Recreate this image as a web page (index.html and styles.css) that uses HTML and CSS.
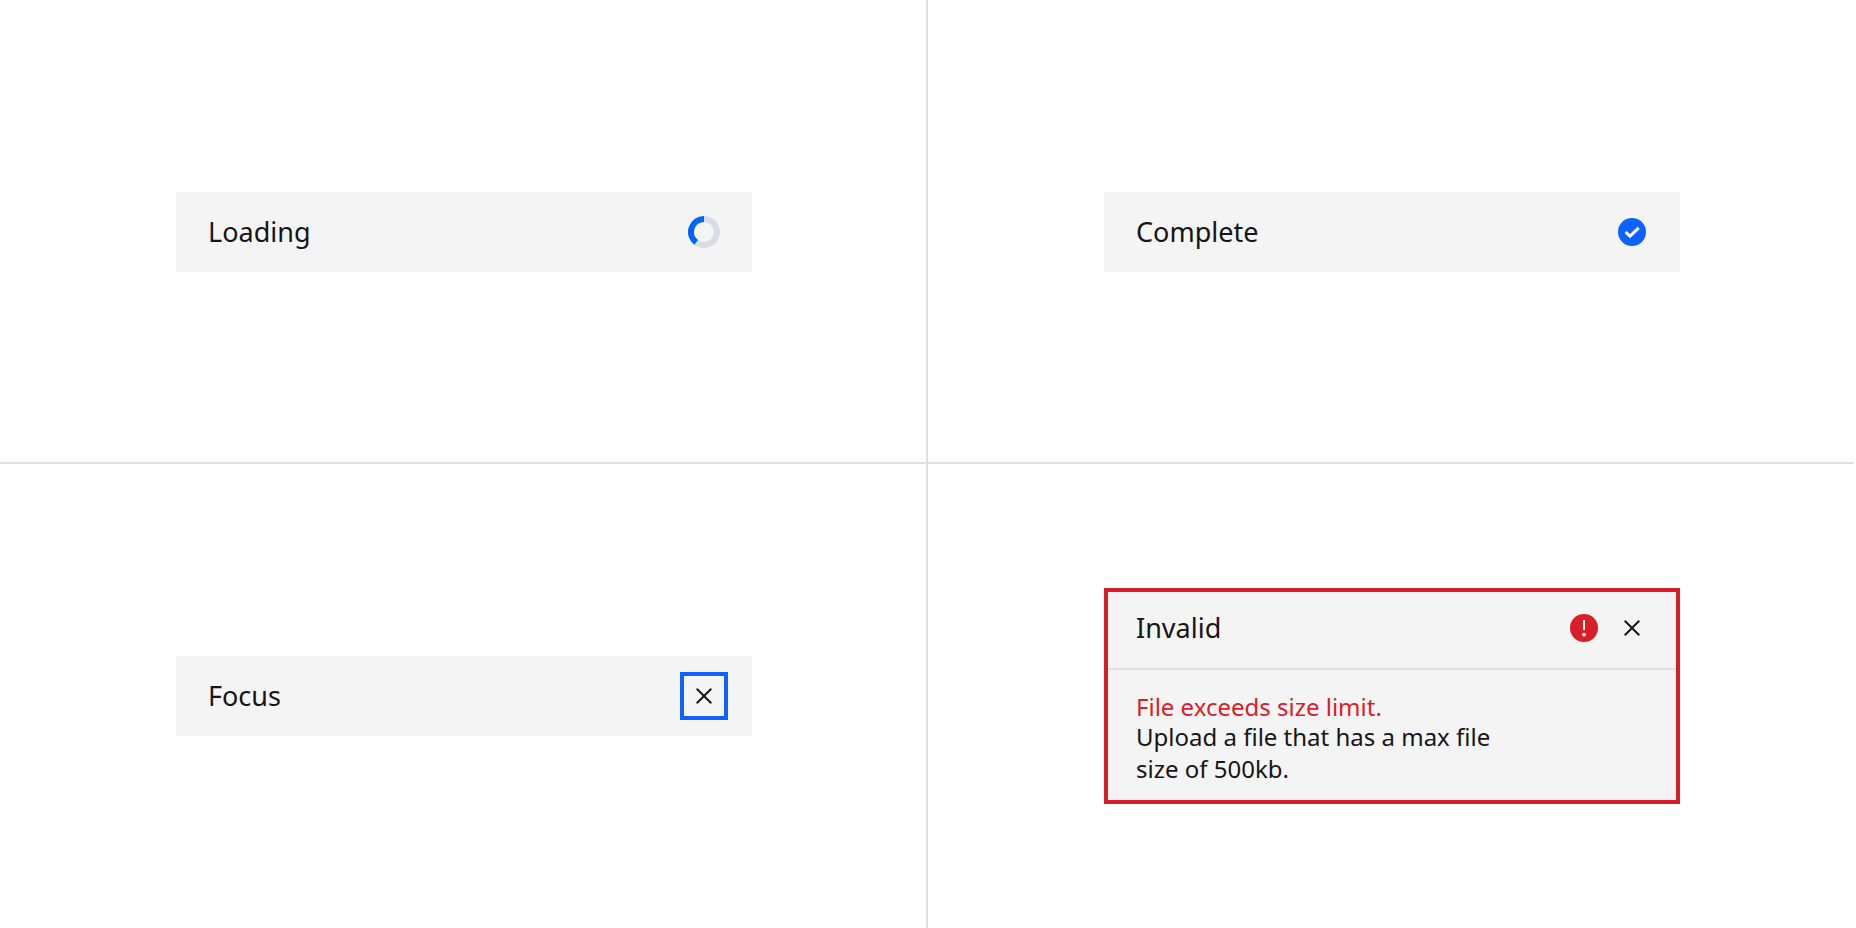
FILE: index.html
```html
<!DOCTYPE html>
<html lang="en">
<head>
<meta charset="utf-8">
<meta name="viewport" content="width=device-width, initial-scale=1">
<title>File uploader states</title>
<link rel="stylesheet" href="styles.css">
</head>
<body>
<main class="states">
  <section class="cell">
    <div class="file">
      <div class="file-row">
        <p class="file-name">Loading</p>
        <svg class="icon" viewBox="0 0 32 32" role="img" aria-label="Uploading">
          <circle class="spinner-track" cx="16" cy="16" r="13"/>
          <path class="spinner-arc" d="M16 3A13 13 0 0 0 8.2 26.4"/>
        </svg>
      </div>
    </div>
  </section>
  <section class="cell">
    <div class="file">
      <div class="file-row">
        <p class="file-name">Complete</p>
        <svg class="icon" viewBox="0 0 32 32" role="img" aria-label="Uploaded">
          <circle class="fill-blue" cx="16" cy="16" r="14"/>
          <path class="tick" d="M9.6 16L14 20.2 22.7 11.9"/>
        </svg>
      </div>
    </div>
  </section>
  <section class="cell">
    <div class="file">
      <div class="file-row">
        <p class="file-name">Focus</p>
        <button class="close close-focused" type="button" aria-label="Remove file">
          <svg class="icon" viewBox="0 0 32 32" aria-hidden="true">
            <path class="fill-dark" d="M24 9.4L22.6 8 16 14.6 9.4 8 8 9.4l6.6 6.6L8 22.6 9.4 24l6.6-6.6 6.6 6.6 1.4-1.4-6.6-6.6z"/>
          </svg>
        </button>
      </div>
    </div>
  </section>
  <section class="cell">
    <div class="file file-invalid">
      <div class="file-row">
        <p class="file-name">Invalid</p>
        <svg class="icon" viewBox="0 0 32 32" role="img" aria-label="Error">
          <circle class="fill-red" cx="16" cy="16" r="14"/>
          <path class="fill-white" d="M15 8h2v10h-2z"/>
          <circle class="fill-white" cx="16" cy="22.6" r="1.9"/>
        </svg>
        <button class="close" type="button" aria-label="Remove file">
          <svg class="icon" viewBox="0 0 32 32" aria-hidden="true">
            <path class="fill-dark" d="M24 9.4L22.6 8 16 14.6 9.4 8 8 9.4l6.6 6.6L8 22.6 9.4 24l6.6-6.6 6.6 6.6 1.4-1.4-6.6-6.6z"/>
          </svg>
        </button>
      </div>
      <div class="message">
        <p class="message-title">File exceeds size limit.</p>
        <p class="message-text">Upload a file that has a max file size of 500kb.</p>
      </div>
    </div>
  </section>
</main>
</body>
</html>
```
FILE: styles.css
```css
* {
  box-sizing: border-box;
}

body {
  margin: 0;
  background: #fff;
  color: #161616;
  font-family: "Noto Sans", sans-serif;
}

p {
  margin: 0;
}

.states {
  display: grid;
  grid-template-columns: 1fr 1fr;
  grid-template-rows: 1fr 1fr;
  min-height: 100vh;
  background:
    linear-gradient(#e0e0e0, #e0e0e0) calc(50% - 1px) 0 / 2px 100% no-repeat,
    linear-gradient(#e0e0e0, #e0e0e0) 0 calc(50% - 1px) / calc(100% - 2px) 2px no-repeat;
}

.cell {
  display: flex;
  align-items: center;
  justify-content: center;
  padding: 24px;
}

.file {
  width: 100%;
  max-width: 576px;
  background: #f4f4f4;
}

.file-invalid {
  outline: 4px solid #da1e28;
  outline-offset: -4px;
}

.file-row {
  display: flex;
  align-items: center;
  gap: 8px;
  height: 80px;
  padding: 0 32px;
}

.file-name {
  flex: 1;
  font-size: 27px;
  line-height: 36px;
}

.icon {
  display: block;
  flex: none;
  width: 32px;
  height: 32px;
}

.close {
  display: grid;
  place-items: center;
  flex: none;
  width: 48px;
  height: 48px;
  margin-right: -8px;
  padding: 0;
  border: 4px solid transparent;
  background: none;
  cursor: pointer;
}

.close-focused,
.close:focus-visible {
  border-color: #0f62fe;
  outline: none;
}

.message {
  padding: 23px 32px 19px;
  border-top: 2px solid #e0e0e0;
  font-size: 24px;
  line-height: 32px;
}

.message-title {
  color: #da1e28;
  line-height: 28px;
}

.message-text {
  max-width: 384px;
}

.spinner-track,
.spinner-arc {
  fill: none;
  stroke: #d8dde3;
  stroke-width: 6;
}

.spinner-arc {
  stroke: #0062ff;
}

.tick {
  fill: none;
  stroke: #fff;
  stroke-width: 3;
}

.fill-blue {
  fill: #0f62fe;
}

.fill-red {
  fill: #da1e28;
}

.fill-white {
  fill: #fff;
}

.fill-dark {
  fill: #161616;
}
```
